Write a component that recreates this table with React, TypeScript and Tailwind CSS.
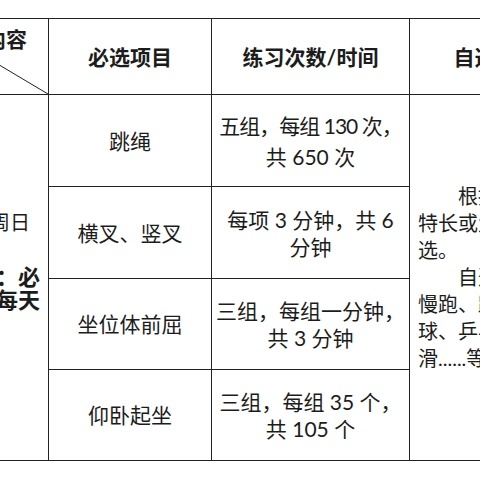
import React from "react";

const lineColor = "#222222";

const practiceItems = [
  { name: "跳绳", lines: ["五组，每组 130 次，", "共 650 次"], leading: "leading-[31px]", firstTracking: "tracking-[-1px]" },
  { name: "横叉、竖叉", lines: ["每项 3 分钟，共 6", "分钟"], leading: "leading-[27px]", firstTracking: "" },
  { name: "坐位体前屈", lines: ["三组，每组一分钟，", "共 3 分钟"], leading: "leading-[27px]", firstTracking: "" },
  { name: "仰卧起坐", lines: ["三组，每组 35 个，", "共 105 个"], leading: "leading-[27px]", firstTracking: "" },
];

function DiagonalHeader() {
  return (
    <div className="relative flex flex-col border-r border-b border-[#222222] pt-[6px]">
      {/* slash across the corner cell */}
      <svg className="absolute inset-0 h-full w-full" preserveAspectRatio="none" viewBox="0 0 100 100">
        <line x1="0" y1="0" x2="100" y2="100" stroke={lineColor} strokeWidth="1" vectorEffect="non-scaling-stroke" />
      </svg>
      <span className="self-end pr-[21px] text-[21px] leading-[28px] font-bold">内容</span>
    </div>
  );
}

export default function App() {
  return (
    <div className="h-[480px] w-[480px] overflow-hidden bg-white pt-[18px] font-['Lato','Noto_Sans_CJK_SC',sans-serif] text-[#1c1c1c]">
      <div className="-ml-[79px] grid w-[661px] grid-cols-[127px_163px_198px_172px] grid-rows-[76px_92px_92px_91px_91px] border-t border-l border-[#222222]">
        {/* Header */}
        <DiagonalHeader />
        <div className="flex items-center justify-center border-r border-b border-[#222222] text-[21px] font-bold">
          必选项目
        </div>
        <div className="flex items-center justify-center border-r border-b border-[#222222] text-[21px] font-bold">
          练习次数/时间
        </div>
        <div className="flex items-center justify-center border-r border-b border-[#222222] text-[21px] font-bold">
          自选项目
        </div>

        {/* Time & requirement column */}
        <div className="row-span-4 border-r border-b border-[#222222] pt-[113px] pr-[8px] pl-[8px]">
          <p className="text-[20px] leading-[28px]">周一至周日</p>
          <p className="mt-[29px] text-[22px] leading-[23px] font-bold">练习量：必选项目每天完成。</p>
        </div>

        {practiceItems.map((item, i) => (
          <React.Fragment key={item.name}>
            <div className="flex items-center justify-center border-r border-b border-[#222222] text-[21px]">
              {item.name}
            </div>
            <div className={`flex flex-col items-center justify-center border-r border-b border-[#222222] text-[21px] ${item.leading}`}>
              <span className={item.firstTracking}>{item.lines[0]}</span>
              <span>{item.lines[1]}</span>
            </div>
            {i === 0 && (
              <div className="row-span-4 flex flex-col justify-center border-r border-b border-[#222222] pr-[8px] pl-[8px] text-[20px] leading-[27px]">
                <p className="indent-[40px]">根据自身的特长或爱好自选。</p>
                <p className="indent-[40px]">自选项目：慢跑、跳舞、足球、乒乓球、轮滑......等。</p>
              </div>
            )}
          </React.Fragment>
        ))}
      </div>
    </div>
  );
}
